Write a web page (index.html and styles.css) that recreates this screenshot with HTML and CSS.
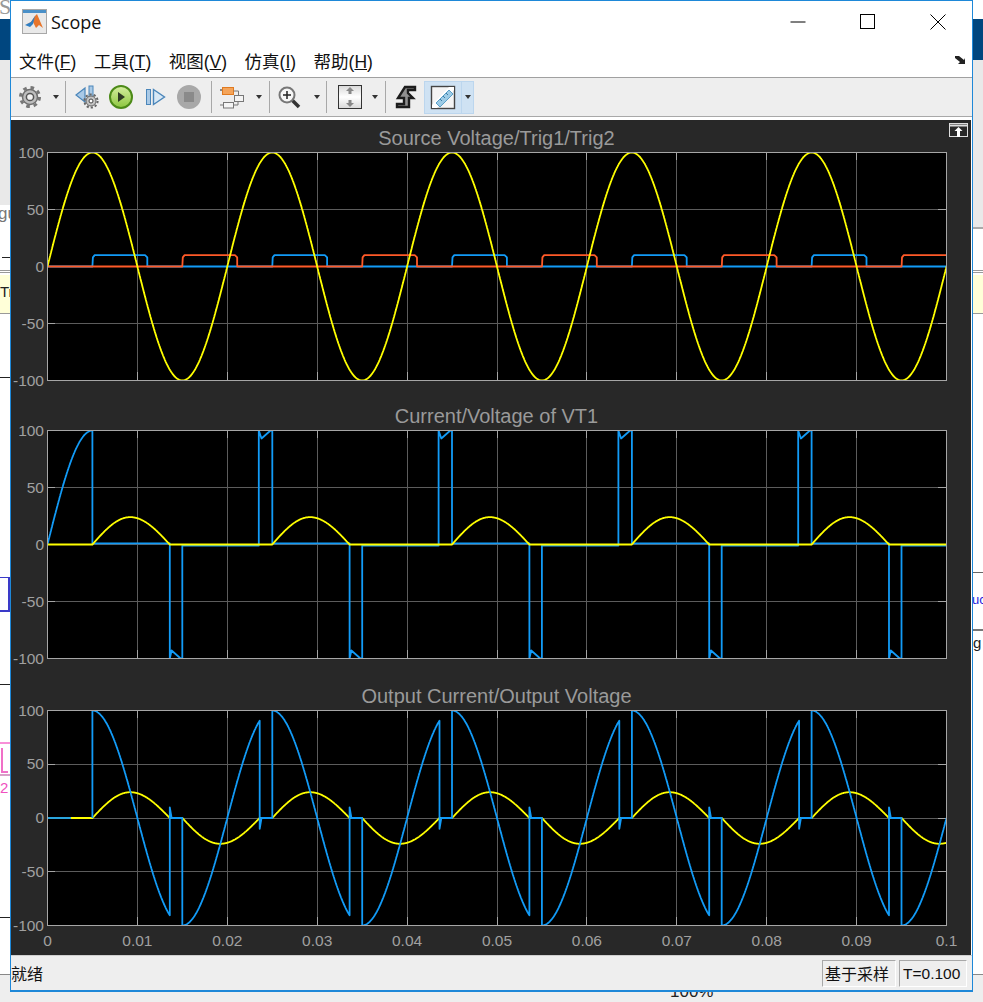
FILE: index.html
```html
<!DOCTYPE html>
<html lang="zh">
<head>
  <meta charset="UTF-8">
  <title>Scope</title>
  <link rel="stylesheet" href="styles.css">
</head>
<body>
  <!-- whatever is behind the scope window -->
  <div class="bg bg-band"></div>
  <div class="bg bg-grey-left"></div>
  <div class="bg bg-grey-right"></div>
  <div class="bg bg-s">S</div>
  <div class="bg bg-gu">gu</div>
  <div class="bg bg-rule-l1"></div>
  <div class="bg bg-rule-l2"></div>
  <div class="bg bg-yellow"></div>
  <div class="bg bg-tr">Tr</div>
  <div class="bg bg-rule-l3"></div>
  <div class="bg bg-bluebox"></div>
  <div class="bg bg-rule-l4"></div>
  <div class="bg bg-pink"></div>
  <div class="bg bg-pink-l"></div>
  <div class="bg bg-two">2</div>
  <div class="bg bg-rule-l5"></div>
  <div class="bg bg-rule-l6"></div>
  <div class="bg bg-rule-r1"></div>
  <div class="bg bg-rule-r2"></div>
  <div class="bg bg-uc">uc</div>
  <div class="bg bg-g">g</div>
  <div class="bg bg-rule-r3"></div>
  <div class="bg bg-bottom"></div>
  <div class="bg bg-percent">100%</div>

  <div class="window">
    <div class="titlebar">
      <svg class="app-icon" width="26" height="26" viewBox="0 0 26 26">
        <rect x="0.5" y="0.5" width="24" height="24" fill="#e9e9e9" stroke="#a8a8a8"/>
        <rect x="1" y="1" width="23" height="3" fill="#4a90c8"/>
        <path d="M3 16l6-3 4-6 2-2 6 14-4-3-3 3-3-6z" fill="#e8762c"/>
        <path d="M3 16l6-3 4-6-2 8-3 3z" fill="#2f7fc4"/>
      </svg>
      <span class="app-title">Scope</span>
      <div class="win-buttons">
        <svg width="16" height="16" viewBox="0 0 16 16"><path d="M0.5 8h15" stroke="#000"/></svg>
        <svg width="16" height="16" viewBox="0 0 16 16"><rect x="0.5" y="0.5" width="14" height="14" fill="none" stroke="#000"/></svg>
        <svg width="16" height="16" viewBox="0 0 16 16"><path d="M0.5 0.5l15 15M15.5 0.5l-15 15" stroke="#000"/></svg>
      </div>
    </div>

    <div class="menubar">
      <span class="menu-item">文件(<u>F</u>)</span>
      <span class="menu-item">工具(<u>T</u>)</span>
      <span class="menu-item">视图(<u>V</u>)</span>
      <span class="menu-item">仿真(<u>I</u>)</span>
      <span class="menu-item">帮助(<u>H</u>)</span>
      <svg class="dock-arrow" width="12" height="10" viewBox="0 0 12 10"><path d="M1 1h4l5 4 1-2v6H4l2-2-5-4z" fill="#222"/></svg>
    </div>

    <div class="toolbar">
      <svg class="tool tool-gear" width="24" height="24" viewBox="0 0 24 24">
        <circle cx="12" cy="12" r="9.5" fill="none" stroke="#777" stroke-width="3" stroke-dasharray="3.6 3.9"/>
        <circle cx="12" cy="12" r="7.5" fill="#bdbdbd" stroke="#6f6f6f" stroke-width="1.5"/>
        <circle cx="12" cy="12" r="3.6" fill="#f2f2f2" stroke="#555" stroke-width="1.5"/>
      </svg>
      <span class="caret caret-gear"></span>
      <span class="sep sep-a"></span>
      <svg class="tool tool-back" width="24" height="24" viewBox="0 0 24 24">
        <path d="M1 10l9-7v14z" fill="#a9c9e6" stroke="#4b86ba" stroke-width="1.2"/>
        <rect x="14" y="1" width="4" height="14" fill="#a9c9e6" stroke="#4b86ba"/>
        <circle cx="16" cy="16" r="6.6" fill="none" stroke="#666" stroke-width="2" stroke-dasharray="2.2 2"/>
        <circle cx="16" cy="16" r="5" fill="#c4c4c4" stroke="#666"/>
        <circle cx="16" cy="16" r="2" fill="#fff" stroke="#444"/>
      </svg>
      <svg class="tool tool-play" width="26" height="26" viewBox="0 0 26 26">
        <defs><linearGradient id="green" x1="0" y1="0" x2="0" y2="1"><stop offset="0" stop-color="#d6eea0"/><stop offset="1" stop-color="#8cc63f"/></linearGradient></defs>
        <circle cx="13" cy="13" r="11" fill="url(#green)" stroke="#4c8a18" stroke-width="2"/>
        <path d="M10 8l7 5-7 5z" fill="#2f3a24"/>
      </svg>
      <svg class="tool tool-step" width="22" height="22" viewBox="0 0 22 22">
        <rect x="1.5" y="3.5" width="4" height="15" fill="#a9c9e6" stroke="#4b86ba"/>
        <path d="M8.5 3.5l11 7.5-11 7.5z" fill="#d8e8f5" stroke="#4b86ba" stroke-width="1.4"/>
      </svg>
      <svg class="tool tool-stop" width="26" height="26" viewBox="0 0 26 26">
        <circle cx="13" cy="13" r="12" fill="#a8a8a8"/>
        <rect x="8" y="8" width="10" height="10" fill="#8a8a8a"/>
      </svg>
      <span class="sep sep-b"></span>
      <svg class="tool tool-lib" width="26" height="24" viewBox="0 0 26 24">
        <rect x="3.5" y="2.5" width="11" height="7" fill="#f4a45a" stroke="#e07a20"/>
        <rect x="1" y="4" width="2" height="2" fill="#888"/>
        <rect x="15.5" y="10.5" width="9" height="6" fill="#f4f4f4" stroke="#777"/>
        <rect x="4.5" y="17.5" width="10" height="5.5" fill="#f4f4f4" stroke="#777"/>
        <path d="M14.5 6h5v4M15 20h4v-3M1 20h3" fill="none" stroke="#777"/>
      </svg>
      <span class="caret caret-lib"></span>
      <span class="sep sep-c"></span>
      <svg class="tool tool-zoom" width="24" height="24" viewBox="0 0 24 24">
        <path d="M14 14l8 8" stroke="#333" stroke-width="3.5"/>
        <circle cx="10" cy="10" r="7.5" fill="#f6f6f6" stroke="#777" stroke-width="2"/>
        <path d="M6 10h8M10 6v8" stroke="#222" stroke-width="1.5"/>
      </svg>
      <span class="caret caret-zoom"></span>
      <span class="sep sep-d"></span>
      <svg class="tool tool-scale" width="24" height="24" viewBox="0 0 24 24">
        <defs><linearGradient id="paper" x1="0" y1="0" x2="0" y2="1"><stop offset="0" stop-color="#d8d8d8"/><stop offset="0.5" stop-color="#fff"/><stop offset="1" stop-color="#d8d8d8"/></linearGradient></defs>
        <rect x="0.5" y="0.5" width="23" height="23" fill="url(#paper)" stroke="#333"/>
        <path d="M12 2l4 4h-2.5v3h-3V6H8zM12 22l-4-4h2.5v-3h3v3H16z" fill="#888"/>
      </svg>
      <span class="caret caret-scale"></span>
      <span class="sep sep-e"></span>
      <svg class="tool tool-stair" width="22" height="24" viewBox="0 0 22 24">
        <path d="M10 2h10v3h-7v3l5 5h-4v9H2v-3h7v-6H3z" fill="#8f8f8f" stroke="#1c1c1c" stroke-width="2.4"/>
      </svg>
      <div class="measure">
        <div class="measure-main">
          <svg width="26" height="26" viewBox="0 0 26 26">
            <rect x="1.5" y="2.5" width="23" height="22" fill="#f4f4f4" stroke="#444" stroke-width="1.4"/>
            <path d="M2 21L19 3h5v3L7 24H2z" fill="#fff"/>
            <path d="M6 19L19 6l4 4L10 23z" fill="#9ccbe6" stroke="#5a9fc8"/>
            <path d="M10 15l2 2M13 12l2 2M16 9l2 2" stroke="#3a7ca4"/>
          </svg>
        </div>
        <div class="measure-drop"><span class="caret caret-flat"></span></div>
      </div>
    </div>

    <div class="scope">
      <svg class="undock" width="20" height="15" viewBox="0 0 20 15">
        <rect x="0.5" y="0.5" width="18" height="13" fill="none" stroke="#ddd"/>
        <path d="M0.5 2.5h18" stroke="#ddd" stroke-width="2"/>
        <path d="M9.5 4l4 4h-2.5v6H8V8H5.5z" fill="#fff"/>
      </svg>
      <section class="plot plot-first">
        <h3 class="plot-title">Source Voltage/Trig1/Trig2</h3>
        <svg id="plot1" class="axes axes-tall"></svg>
      </section>
      <section class="plot plot-second">
        <h3 class="plot-title">Current/Voltage of VT1</h3>
        <svg id="plot2" class="axes axes-tall"></svg>
      </section>
      <section class="plot plot-third">
        <h3 class="plot-title">Output Current/Output Voltage</h3>
        <svg id="plot3" class="axes axes-short"></svg>
      </section>
    </div>

    <div class="statusbar">
      <span class="status-msg">就绪</span>
      <span class="status-box status-mode">基于采样</span>
      <span class="status-box status-time">T=0.100</span>
    </div>
  </div>

  <script src="plot.js"></script>
</body>
</html>
```

FILE: styles.css
```css
* {
  box-sizing: border-box;
}

body {
  margin: 0;
  width: 983px;
  height: 1002px;
  overflow: hidden;
  position: relative;
  background: #fff;
  font-family: "Noto Sans CJK SC", "Liberation Sans", sans-serif;
}

/* stuff behind the window */
.bg {
  position: absolute;
}
.bg-band { left: 0; top: 19px; width: 983px; height: 41px; background: #00467f; }
.bg-grey-left { left: 0; top: 60px; width: 10px; height: 145px; background: #e9e9e9; }
.bg-grey-right { left: 973px; top: 60px; width: 10px; height: 167px; background: #e9e9e9; }
.bg-s { left: -1px; top: -6px; font: 22px "Liberation Serif", serif; color: #999; }
.bg-gu { left: -2px; top: 204px; font: 17px "Liberation Sans", sans-serif; color: #777; }
.bg-rule-l1 { left: 2px; top: 257px; width: 8px; height: 1px; background: #222; }
.bg-rule-l2 { left: 0; top: 270px; width: 983px; height: 3px; border-top: 1px solid #999; border-bottom: 1px solid #999; }
.bg-yellow { left: 0; top: 275px; width: 983px; height: 39px; background: #ffffd8; border-bottom: 1px solid #999; }
.bg-tr { left: 0; top: 283px; font: 15px "Liberation Sans", sans-serif; color: #222; }
.bg-rule-l3 { left: 0; top: 377px; width: 10px; height: 1px; background: #222; }
.bg-bluebox { left: -6px; top: 577px; width: 16px; height: 35px; border: 1px solid #3a3ac8; border-width: 1px 2px 2px 1px; }
.bg-rule-l4 { left: 0; top: 684px; width: 10px; height: 1px; background: #222; }
.bg-pink { left: 0; top: 742px; width: 10px; height: 34px; border-top: 2px solid #f890d8; border-bottom: 2px solid #d8a0c8; }
.bg-pink-l { left: 1px; top: 748px; width: 7px; height: 25px; border-left: 2px solid #f070c8; border-bottom: 2px solid #f070c8; }
.bg-two { left: 0; top: 779px; font: 15px "Liberation Sans", sans-serif; color: #f050c0; }
.bg-rule-l5 { left: 0; top: 917px; width: 10px; height: 1px; background: #222; }
.bg-rule-l6 { left: 0; top: 974px; width: 983px; height: 1px; background: #888; }
.bg-rule-r1 { left: 973px; top: 572px; width: 10px; height: 1px; background: #666; }
.bg-rule-r2 { left: 973px; top: 629px; width: 10px; height: 2px; background: #777; }
.bg-uc { left: 972px; top: 592px; font: 13px "Liberation Sans", sans-serif; color: #2222dd; }
.bg-g { left: 973px; top: 634px; font: 15px "Liberation Sans", sans-serif; color: #222; }
.bg-rule-r3 { left: 973px; top: 227px; width: 10px; height: 2px; background: #aaa; }
.bg-bottom { left: 0; top: 975px; width: 983px; height: 27px; background: #eee; }
.bg-percent { left: 670px; top: 982px; font: 17px "Liberation Sans", sans-serif; color: #222; }

/* the scope window */
.window {
  position: relative;
  z-index: 1;
  margin-left: 10px;
  width: 963px;
  height: 992px;
  border: 1px solid #1e88d8;
  border-bottom-width: 2px;
  background: #fff;
  display: flex;
  flex-direction: column;
}

.titlebar {
  height: 38px;
  flex: none;
  display: flex;
  align-items: center;
  padding: 4px 0 0 11px;
}
.app-title {
  margin-left: 3px;
  font: 18px "Open Sans", "Noto Sans", sans-serif;
  color: #111;
}
.win-buttons {
  margin-left: auto;
  padding-right: 26px;
  display: flex;
  gap: 54px;
}

.menubar {
  height: 39px;
  flex: none;
  display: flex;
  align-items: center;
  gap: 17.5px;
  padding: 4px 6px 0 8px;
  border-bottom: 1px solid #a0a0a0;
  font-family: "Liberation Sans", "Noto Sans CJK SC", sans-serif;
  font-size: 17.5px;
  color: #111;
}
.dock-arrow {
  margin-left: auto;
}

.toolbar {
  height: 39px;
  flex: none;
  display: flex;
  align-items: center;
  background: #eee;
  border-bottom: 1px solid #a8a8a8;
  padding-left: 7px;
}
.caret {
  width: 0;
  height: 0;
  border: 3.5px solid transparent;
  border-top: 4px solid #333;
  border-bottom: 0;
}
.caret-gear { margin-left: 11px; }
.caret-lib { margin-left: 11px; }
.caret-zoom { margin-left: 13px; }
.caret-scale { margin-left: 10px; }
.caret-flat { margin-left: 0; }
.sep {
  width: 1px;
  height: 32px;
  background: #a8a8a8;
}
.sep-a { margin: 0 9px 0 6px; }
.tool-play { margin-left: 9px; }
.tool-step { margin-left: 11px; }
.tool-stop { margin-left: 9px; }
.sep-b { margin: 0 7px 0 9px; }
.sep-c { margin: 0 7px 0 7px; }
.sep-d { margin: 0 11px 0 6px; }
.sep-e { margin: 0 9px 0 7px; }

.measure {
  margin-left: 7px;
  height: 33px;
  display: flex;
}
.measure-main {
  width: 38px;
  background: #cfe2f3;
  border: 1px solid #bcd6ee;
  display: flex;
  align-items: center;
  justify-content: center;
}
.measure-drop {
  width: 12px;
  background: #cfe2f3;
  border: 1px solid #bcd6ee;
  border-left: 0;
  display: flex;
  align-items: center;
  justify-content: center;
}

.scope {
  position: relative;
  flex: 1;
  margin-top: 3px;
  margin-right: 1px;
  padding: 0 25px 0 36px;
  background: #282828;
  font-family: "Liberation Sans", sans-serif;
}
.undock {
  position: absolute;
  right: 2px;
  top: 3px;
}
.plot {
  display: flex;
  flex-direction: column;
}
.plot-title {
  margin: 0;
  display: flex;
  align-items: flex-end;
  justify-content: center;
  padding-bottom: 3px;
  font-size: 20px;
  line-height: 22px;
  font-weight: normal;
  color: #9a9a9a;
}
.plot-first .plot-title { height: 32px; }
.plot-second .plot-title { height: 50px; }
.plot-third .plot-title { height: 52px; }

.axes {
  display: block;
  width: 900px;
  overflow: visible;
}
.axes-tall { height: 228px; }
.axes-short { height: 216px; }
.axes-bg { fill: #000; }
.grid { stroke: #5c5c5c; stroke-width: 1; shape-rendering: crispEdges; }
.tick { stroke: #a6a6a6; stroke-width: 1; shape-rendering: crispEdges; }
.frame { fill: none; stroke: #a6a6a6; stroke-width: 1; shape-rendering: crispEdges; }
.tick-label { fill: #a0a0a0; font-size: 15.5px; }
.trace { fill: none; stroke-width: 1.8; stroke-linejoin: round; }
.trace-yellow { stroke: #ffff00; }
.trace-blue { stroke: #129bf7; }
.trace-orange { stroke: #ff5a28; }

.statusbar {
  flex: none;
  height: 35px;
  display: flex;
  align-items: center;
  gap: 3px;
  padding-right: 5px;
  background: #eee;
  border-top: 1px solid #cfcfcf;
  font-size: 16px;
  color: #111;
}
.status-msg {
  margin-right: auto;
}
.status-box {
  height: 27px;
  line-height: 25px;
  border: 1px solid;
  border-color: #a8a8a8 #fff #fff #a8a8a8;
  padding-left: 2px;
}
.status-mode { width: 74px; }
.status-time {
  width: 68px;
  font-family: "Liberation Sans", sans-serif;
  font-size: 15.5px;
  padding-left: 3px;
}
```

FILE: plot.js
```js
var NS = "http://www.w3.org/2000/svg";
var W = 899;
var PERIOD = 0.02;

function el(parent, name, attrs, text) {
  var e = document.createElementNS(NS, name);
  for (var k in attrs) e.setAttribute(k, attrs[k]);
  if (text !== undefined) e.textContent = text;
  parent.appendChild(e);
  return e;
}

function source(t) {
  return 100 * Math.sin(2 * Math.PI * 50 * t);
}

// one half-wave of the load current, peak 24
function lobe(p) {
  if (p < 0.005 || p > 0.0136) return 0;
  if (p < 0.0092) return 24 * Math.sin((p - 0.005) / 0.0042 * Math.PI / 2);
  return 24 * Math.cos((p - 0.0092) / 0.0044 * Math.PI / 2);
}

function sampled(fn, from, to) {
  var pts = [];
  for (var t = from; t < to; t += 0.00005) pts.push([t, fn(t)]);
  pts.push([to, fn(to)]);
  return pts;
}

function pulses(first) {
  var pts = [[0, 0]];
  for (var t = first; t < 0.1; t += PERIOD) {
    var end = Math.min(t + 0.0061, 0.1);
    pts.push([t, 0], [t + 0.00005, 8], [t + 0.00025, 10]);
    if (end < 0.1) pts.push([end - 0.00025, 10], [end, 8], [end, 0]);
    else pts.push([0.1, 10]);
  }
  if (pts[pts.length - 1][0] < 0.1 && pts[pts.length - 1][1] === 0) pts.push([0.1, 0]);
  return pts;
}

function thyristorVoltage() {
  var pts = sampled(source, 0, 0.005);
  pts.push([0.005, 100], [0.005, 1]);
  for (var k = 0; k < 5; k++) {
    var o = k * PERIOD;
    pts.push([o + 0.0136, 1], [o + 0.0136, -100], [o + 0.0138, -93], [o + 0.0148, -100],
      [o + 0.015, -100], [o + 0.015, -1]);
    if (k < 4) {
      pts.push([o + 0.0235, -1], [o + 0.0235, 100], [o + 0.0238, 93], [o + 0.0248, 100],
        [o + 0.025, 100], [o + 0.025, 1]);
    } else {
      pts.push([0.1, -1]);
    }
  }
  return pts;
}

function outputVoltage() {
  var pts = [[0.005, 0]];
  for (var k = 0; k < 5; k++) {
    var o = k * PERIOD;
    pts = pts.concat(sampled(source, o + 0.005, o + 0.0136));
    pts.push([o + 0.0136, 10], [o + 0.0138, 0], [o + 0.015, 0]);
    pts = pts.concat(sampled(source, o + 0.015, Math.min(o + 0.0236, 0.1)));
    if (k < 4) pts.push([o + 0.0236, -10], [o + 0.0238, 0], [o + 0.025, 0]);
  }
  return pts;
}

var VT1_CURRENT = function (t) { return lobe(t % PERIOD); };
var LOAD_CURRENT = function (t) {
  var p = t % PERIOD;
  if (p < 0.005) p += 0.02;
  if (t < 0.005) return 0;
  if (p <= 0.015) return lobe(p);
  return -lobe(p - 0.01);
};

function drawPlot(id, height, traces, xLabels) {
  var svg = document.getElementById(id);
  var X = function (t) { return 0.5 + t / 0.1 * W; };
  var Y = function (v) { return 0.5 + (100 - v) / 200 * height; };

  el(svg, "rect", { class: "axes-bg", x: 0.5, y: 0.5, width: W, height: height });

  for (var i = 1; i < 10; i++) {
    var x = Math.round(i * W / 10) + 0.5;
    el(svg, "line", { class: "grid", x1: x, x2: x, y1: 0, y2: height });
    el(svg, "line", { class: "tick", x1: x, x2: x, y1: 0, y2: 8 });
    el(svg, "line", { class: "tick", x1: x, x2: x, y1: height - 8, y2: height });
  }
  [50, 0, -50].forEach(function (v) {
    var y = Math.round(Y(v) - 0.5) + 0.5;
    el(svg, "line", { class: "grid", x1: 0, x2: W, y1: y, y2: y });
    el(svg, "line", { class: "tick", x1: 0, x2: 8, y1: y, y2: y });
    el(svg, "line", { class: "tick", x1: W - 8, x2: W, y1: y, y2: y });
  });

  var clip = el(el(svg, "defs", {}), "clipPath", { id: id + "-clip" });
  el(clip, "rect", { x: 0, y: 0, width: W + 1, height: height + 1 });

  traces.forEach(function (tr) {
    var pts = tr.pts.map(function (p) {
      return X(p[0]).toFixed(1) + "," + Y(p[1]).toFixed(1);
    }).join(" ");
    el(svg, "polyline", { class: "trace trace-" + tr.color, points: pts, "clip-path": "url(#" + id + "-clip)" });
  });

  el(svg, "rect", { class: "frame", x: 0.5, y: 0.5, width: W, height: height });

  [100, 50, 0, -50, -100].forEach(function (v) {
    el(svg, "text", { class: "tick-label", x: -3, y: Y(v) + 5, "text-anchor": "end" }, String(v));
  });

  if (xLabels) {
    ["0", "0.01", "0.02", "0.03", "0.04", "0.05", "0.06", "0.07", "0.08", "0.09", "0.1"].forEach(function (s, i) {
      el(svg, "text", { class: "tick-label", x: X(i / 100), y: height + 21, "text-anchor": "middle" }, s);
    });
  }
}

drawPlot("plot1", 228, [
  { color: "blue", pts: pulses(0.005) },
  { color: "orange", pts: pulses(0.015) },
  { color: "yellow", pts: sampled(source, 0, 0.1) }
]);

drawPlot("plot2", 228, [
  { color: "blue", pts: thyristorVoltage() },
  { color: "yellow", pts: sampled(VT1_CURRENT, 0, 0.1) }
]);

drawPlot("plot3", 215, [
  { color: "yellow", pts: sampled(LOAD_CURRENT, 0, 0.1) },
  { color: "blue", pts: [[0, 0], [0.0026, 0]] },
  { color: "blue", pts: outputVoltage() }
], true);
```
